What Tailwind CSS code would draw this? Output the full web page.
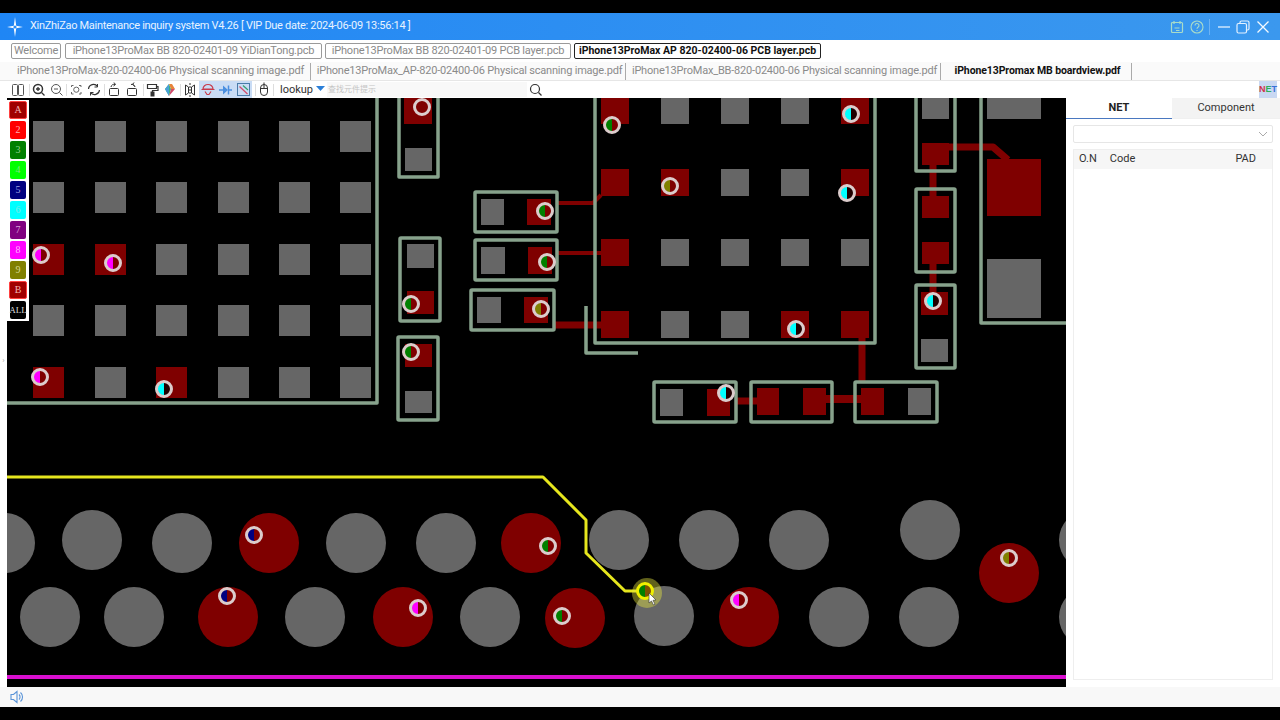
<!DOCTYPE html>
<html lang="en">
<head>
    <meta charset="UTF-8">
    <title>XinZhiZao Maintenance inquiry system</title>
    <script src="https://cdn.jsdelivr.net/npm/@tailwindcss/browser@4"></script>
</head>
<body class="bg-black">
<div class="w-[1280px] h-[720px] overflow-hidden flex flex-col bg-black font-['Roboto','Noto_Sans_CJK_SC',sans-serif]">
    <div class="h-[13px] shrink-0 bg-black"></div>

    <!-- title bar -->
    <div class="h-[27px] shrink-0 flex items-center bg-gradient-to-r from-[#1f86f5] to-[#3b98ee] text-white">
        <svg class="ml-[7px] w-4 h-5" viewBox="0 0 16 20"><path d="M8 0 L9.200 8.800 L16 10 L9.200 11.200 L8 20 L6.800 11.200 L0 10 L6.800 8.800 Z" fill="#fff"/><circle cx="8" cy="10" r="1.600" fill="#2b8cf3"/></svg>
        <span class="ml-[7px] text-[11px] tracking-[-0.3px] text-[#e8f3ff] whitespace-nowrap">XinZhiZao Maintenance inquiry system V4.26 [ VIP Due date: 2024-06-09 13:56:14 ]</span>
        <div class="ml-auto flex items-center">
            <svg class="w-3.5 h-3.5" viewBox="0 0 14 14" fill="none" stroke="#a9dcc9" stroke-width="1.200"><rect x="1.500" y="2.500" width="11" height="10" rx="1"/><path d="M4 1v3M10 1v3M4.500 8h5M6 10.500h3.500"/></svg>
            <svg class="ml-[6px] w-3.5 h-3.5" viewBox="0 0 14 14" fill="none" stroke="#a9dcc9" stroke-width="1.100"><circle cx="7" cy="7" r="6"/><path d="M5 5.500a2 2 0 1 1 3 1.700c-.7.400-1 .8-1 1.600M7 10v1"/></svg>
            <div class="ml-[5px] w-px h-4 bg-[#6db3f5]"></div>
            <svg class="ml-[8px] w-3 h-3" viewBox="0 0 12 12" stroke="#e4f1ff" stroke-width="1.300"><path d="M0 6h12"/></svg>
            <svg class="ml-[6px] w-3.5 h-3.5" viewBox="0 0 14 14" fill="none" stroke="#e4f1ff" stroke-width="1.200"><rect x="1" y="3.500" width="9.500" height="9.500" rx="1.500"/><path d="M4 3.500V2.500A1.500 1.500 0 0 1 5.500 1H11.500A1.500 1.500 0 0 1 13 2.500V8.500A1.500 1.500 0 0 1 11.500 10H10.500"/></svg>
            <svg class="ml-[7px] mr-[11px] w-3 h-3" viewBox="0 0 12 12" stroke="#f4faff" stroke-width="1.300"><path d="M.5.5l11 11M11.500.5l-11 11"/></svg>
        </div>
    </div>

    <!-- pcb tabs -->
    <div class="h-[22px] shrink-0 flex items-center pl-[11px] gap-[3px] bg-white text-[11px] tracking-[-0.2px] text-[#8a8a8a] whitespace-nowrap">
        <div class="w-[50px] h-[16px] flex items-center justify-center border border-[#9a9a9a] rounded-[2px]">Welcome</div>
        <div class="ml-[1px] w-[257px] h-[16px] flex items-center justify-center border border-[#9a9a9a] rounded-[2px]">iPhone13ProMax BB 820-02401-09 YiDianTong.pcb</div>
        <div class="w-[246px] h-[16px] flex items-center justify-center border border-[#9a9a9a] rounded-[2px]">iPhone13ProMax BB 820-02401-09 PCB layer.pcb</div>
        <div class="w-[247px] h-[16px] flex items-center justify-center border border-[#222] rounded-[2px] font-bold text-[#111] text-[10.500px] tracking-normal">iPhone13ProMax AP 820-02400-06 PCB layer.pcb</div>
    </div>

    <!-- pdf tabs -->
    <div class="h-[19px] shrink-0 flex items-center bg-[#fafafa] border-b border-[#e6e6e6] text-[11px] tracking-[-0.2px] text-[#8a8a8a] whitespace-nowrap">
        <div class="w-[311px] h-[17px] flex items-center justify-center pl-[11px] border-r border-[#aaa]">iPhone13ProMax-820-02400-06 Physical scanning image.pdf</div>
        <div class="w-[315px] h-[17px] flex items-center justify-center pl-[3px] border-r border-[#aaa]">iPhone13ProMax_AP-820-02400-06 Physical scanning image.pdf</div>
        <div class="w-[315px] h-[17px] flex items-center justify-center pl-[3px] border-r border-[#aaa]">iPhone13ProMax_BB-820-02400-06 Physical scanning image.pdf</div>
        <div class="w-[191px] h-[17px] flex items-center justify-center pl-[3px] border-r border-[#aaa] font-bold text-[#111] text-[10.500px] tracking-[-0.1px]">iPhone13Promax MB boardview.pdf</div>
    </div>

    <!-- toolbar -->
    <div class="h-[17px] shrink-0 flex items-center bg-white relative">
        <svg class="absolute left-0 top-0 w-[560px] h-[17px]" viewBox="0 0 560 17" fill="none" stroke="#333" stroke-width="1">
            <rect x="12.500" y="3.500" width="5" height="11" rx="1" stroke="#555"/><rect x="18.500" y="3.500" width="5" height="11" rx="1" stroke="#555"/>
            <path d="M29.500 3v12M66.500 3v12M104.500 3v12M143.500 3v12M180.500 3v12M255.500 3v12M273.500 3v12" stroke="#ddd"/>
            <circle cx="38" cy="8" r="4.500" stroke-width="1.500"/><path d="M41.500 11.500l3 3M36 8h4M38 6v4" stroke-width="1.300"/>
            <circle cx="56" cy="8" r="4.500" stroke="#555"/><path d="M59.500 11.500l3 3M54 8h4" stroke="#555"/>
            <path d="M71.500 6V4.500h2M79 4.500h2V6M81 11v2h-2M73.500 13h-2v-2" stroke="#666"/><circle cx="76.300" cy="8.700" r="2.600" stroke="#666"/>
            <path d="M88.500 8a5 5 0 0 1 9-2.500M99.500 9a5 5 0 0 1-9 2.500" stroke-width="1.200"/><path d="M97.500 3v3h-3M90.500 14.500v-3h3" stroke-width="1"/>
            <rect x="109.500" y="7.500" width="9" height="7" rx="1"/><path d="M111 6a3 3 0 0 1 4-2.500M114 1.500l1.500 2-2 1.500"/>
            <rect x="127.500" y="7.500" width="9" height="7" rx="1"/><path d="M135 6a3 3 0 0 0-4-2.500M134 1.500l-1.500 2 2 1.500"/>
            <path d="M147.500 3.500h9v4h-9zM156.500 5.500h1.500v4h-5.500v2" stroke-width="1.200"/><rect x="151" y="11" width="3" height="4" fill="#333"/>
            <path d="M165 8l4-5 2 5-2 7z" fill="#36b37e" stroke="none"/><path d="M171 8l-2-5h3l3 5z" fill="#e6843c" stroke="none"/><path d="M171 8h4l-6 7z" fill="#d14b6a" stroke="none"/><path d="M165 8l4 7V3z" fill="#4a9fd8" stroke="none"/>
            <path d="M185.500 4v10l3-2V6zM194.500 4v10l-3-2V6z"/><path d="M190 2v14" stroke-dasharray="2 1"/>
            <rect x="199" y="0" width="18" height="17" fill="#c9dcf5" stroke="none"/>
            <path d="M203 8a5 4.500 0 0 1 10 0zM201.500 8.500h13M205 10.500l2 3h2l2-3" stroke="#c83a4a" stroke-width="1.200"/>
            <rect x="217" y="0" width="18" height="17" fill="#c9dcf5" stroke="none"/>
            <path d="M219 9h4M228 9h4" stroke="#4a8fe0" stroke-width="1.500"/><path d="M223 4.500l5 4.500-5 4.500z" fill="#4a8fe0" stroke="none"/><path d="M228.500 4.500v9" stroke="#4a8fe0" stroke-width="1.500"/>
            <rect x="235" y="0" width="17" height="17" fill="#c9dcf5" stroke="none"/>
            <rect x="237.500" y="2.500" width="12" height="12" stroke="#4a7ba8" stroke-width="1"/><path d="M239.500 5.500l8 7.500" stroke="#d14b6a" stroke-width="1.200"/><path d="M243 4.500l5 4.500" stroke="#36a070" stroke-width="1.200"/>
            <rect x="260.500" y="3.500" width="7" height="11" rx="3.500"/><path d="M264 3.500v4M260.500 7.500h7M264 1.500v2"/>
            <rect x="327" y="1" width="200" height="15" fill="#f8f8f8" stroke="none"/>
            <path d="M316 5h9l-4.500 5z" fill="#2b7fd8" stroke="none"/>
            <circle cx="535" cy="8" r="4.500" stroke-width="1.200"/><path d="M538.500 11.500l3 3" stroke-width="1.200"/>
        </svg>
        <span class="absolute left-[280px] top-0 text-[11px] leading-[17px] text-[#333]">lookup</span>
        <span class="absolute left-[328px] top-0 text-[8px] leading-[17px] text-[#c4c4c4]">查找元件提示</span>
        <div class="absolute right-[3px] top-0 w-[18px] h-[17px] bg-[#c9d8f2] flex items-center justify-center text-[9px] font-bold font-['Liberation_Sans',sans-serif]"><span class="text-[#d0304a]">N</span><span class="text-[#2fae5a]">E</span><span class="text-[#3a6fd8]">T</span></div>
    </div>

    <!-- main -->
    <div class="h-[589px] shrink-0 flex bg-white">
        <div class="w-[7px] shrink-0 bg-white flex items-center justify-center text-[8px] leading-none text-[#aaa] pb-[64px]">›</div>

        <div class="relative w-[1059px] shrink-0 bg-black overflow-hidden">
            <svg id="board" class="block" width="1059" height="589" viewBox="7 98 1059 589"></svg>

            <!-- layer buttons -->
            <div class="absolute left-0 top-[2px] w-[22px] h-[221px] bg-white flex flex-col items-center gap-[2px] pt-[1px] font-['Liberation_Serif',serif] text-[10px] leading-none">
                <div class="w-[18px] h-[18px] rounded-[2px] bg-[#a00000] border border-[#ff4040] text-[#f0b0b0] flex items-center justify-center">A</div>
                <div class="w-[16px] h-[18px] rounded-[2px] bg-[#ff0000] text-[#ffb0b0] flex items-center justify-center">2</div>
                <div class="w-[16px] h-[18px] rounded-[2px] bg-[#008000] text-[#90d090] flex items-center justify-center">3</div>
                <div class="w-[16px] h-[18px] rounded-[2px] bg-[#00ff00] text-[#80e080] flex items-center justify-center">4</div>
                <div class="w-[16px] h-[18px] rounded-[2px] bg-[#000080] text-[#a0a0e0] flex items-center justify-center">5</div>
                <div class="w-[16px] h-[18px] rounded-[2px] bg-[#00ffff] text-[#80e8e8] flex items-center justify-center">6</div>
                <div class="w-[16px] h-[18px] rounded-[2px] bg-[#800080] text-[#d8a0d8] flex items-center justify-center">7</div>
                <div class="w-[16px] h-[18px] rounded-[2px] bg-[#ff00ff] text-[#ffb0ff] flex items-center justify-center">8</div>
                <div class="w-[16px] h-[18px] rounded-[2px] bg-[#808000] text-[#d8d890] flex items-center justify-center">9</div>
                <div class="w-[18px] h-[18px] rounded-[2px] bg-[#a00000] border border-[#ff4040] text-[#f0b0b0] flex items-center justify-center">B</div>
                <div class="w-[16px] h-[18px] rounded-[2px] bg-black text-[#ddd] text-[9px] flex items-center justify-center">ALL</div>
            </div>
        </div>

        <!-- net panel -->
        <div class="w-[214px] shrink-0 flex flex-col bg-white text-[11px] text-[#333]">
            <div class="h-[21px] shrink-0 flex">
                <div class="w-[106px] flex items-center justify-center font-bold text-[#222] border-b border-[#4a78c0]">NET</div>
                <div class="w-[108px] flex items-center justify-center bg-[#f3f3f3] border-b border-[#f0f0f0]">Component</div>
            </div>
            <div class="mt-[6px] mx-[7px] h-[18px] shrink-0 border border-[#e6e6e6] rounded-[2px] flex items-center justify-end pr-[4px]">
                <svg class="w-2.5 h-2.5" viewBox="0 0 10 10" fill="none" stroke="#aaa"><path d="M1 3l4 4 4-4"/></svg>
            </div>
            <div class="mt-[6px] mb-[7px] mx-[7px] flex-1 border border-[#eee] flex flex-col">
                <div class="h-[19px] flex items-center bg-[#f6f6f6]">
                    <span class="ml-[5px]">O.N</span>
                    <span class="ml-[13px]">Code</span>
                    <span class="ml-auto mr-[16px]">PAD</span>
                </div>
            </div>
        </div>
    </div>

    <!-- status bar -->
    <div class="h-[20px] shrink-0 flex items-center bg-[#f8f8f8]">
        <svg class="ml-[10px] w-[14px] h-[14px]" viewBox="0 0 14 14" fill="none" stroke="#5a94d8" stroke-width="1.100"><path d="M1 4.500h2.500L7 1.500v11L3.500 9.500H1z"/><path d="M9 4.500a3.500 3.500 0 0 1 0 5M10.500 2.500a6 6 0 0 1 0 9"/></svg>
    </div>
    <div class="flex-1 bg-black"></div>
</div>

<script>
    const RED = '#7f0000';
    const GRAY = '#666666';
    const OUTLINE = '#87a28c';
    let out = '';

    function pad(x1, y1, x2, y2, fill) {
        out += `<rect x="${x1}" y="${y1}" width="${x2 - x1}" height="${y2 - y1}" fill="${fill}"/>`;
    }
    function line(points, color, width) {
        out += `<polyline points="${points}" fill="none" stroke="${color}" stroke-width="${width}" stroke-linejoin="round"/>`;
    }
    function box(x1, y1, x2, y2) {
        out += `<rect x="${x1}" y="${y1}" width="${x2 - x1}" height="${y2 - y1}" fill="none" stroke="${OUTLINE}" stroke-width="3.500" rx="1"/>`;
    }
    function via(cx, cy, color, right = RED, ring = '#dccccc') {
        out += `<circle cx="${cx}" cy="${cy}" r="6.500" fill="${right}"/>`;
        out += `<path d="M${cx} ${cy - 6.5}A6.500 6.500 0 0 0 ${cx} ${cy + 6.5}Z" fill="${color}"/>`;
        out += `<circle cx="${cx}" cy="${cy}" r="7.500" fill="none" stroke="${ring}" stroke-width="3"/>`;
    }

    // left BGA grid
    const gridX = [33, 95, 156, 218, 279, 340];
    const gridY = [121, 182, 244, 305, 367];
    const gridRed = ['0,2', '1,2', '0,4', '2,4'];
    gridX.forEach((x, c) => gridY.forEach((y, r) => {
        pad(x, y, x + 31, y + 31, gridRed.includes(c + ',' + r) ? RED : GRAY);
    }));
    line('7,403 377,403 377,98', OUTLINE, 3.5);

    // traces
    line('558,203 593,203 601,195', RED, 4);
    line('558,253 601,253', RED, 4);
    line('554,325 601,325', RED, 7);
    line('862,338 862,382', RED, 7);
    line('737,401 757,401', RED, 7);
    line('826,399 861,399', RED, 8);
    line('949,147 993,147 1008,160', RED, 7);
    line('933,165 933,196', RED, 7);
    line('933,264 933,292', RED, 7);

    // right IC
    const icX = [601, 661, 721, 781, 841];
    const icRows = [[98, 124, 'RGGGR'], [169, 196, 'RRGGR'], [239, 266, 'RGGGG'], [311, 338, 'RGGRR']];
    icRows.forEach(([y1, y2, s]) => icX.forEach((x, i) => pad(x, y1, x + 28, y2, s[i] === 'R' ? RED : GRAY)));
    line('595,98 595,343 875,343 875,98', OUTLINE, 3.5);
    line('586,306 586,353 638,353', OUTLINE, 3.5);

    // two pad components
    pad(404, 98, 432, 124, RED); pad(405, 148, 432, 171, GRAY);
    pad(407, 244, 434, 268, GRAY); pad(407, 291, 434, 314, RED);
    pad(405, 344, 432, 367, RED); pad(405, 391, 432, 413, GRAY);
    pad(481, 199, 504, 225, GRAY); pad(527, 199, 551, 225, RED);
    pad(481, 247, 505, 274, GRAY); pad(528, 247, 552, 274, RED);
    pad(477, 297, 501, 323, GRAY); pad(524, 297, 548, 323, RED);
    pad(660, 389, 683, 416, GRAY); pad(707, 389, 730, 416, RED);
    pad(757, 388, 779, 415, RED); pad(803, 388, 826, 415, RED);
    pad(861, 388, 884, 415, RED); pad(908, 388, 931, 415, GRAY);
    pad(922, 98, 949, 119, GRAY); pad(922, 143, 949, 165, RED);
    pad(922, 196, 949, 218, RED); pad(922, 242, 949, 264, RED);
    pad(921, 292, 948, 315, RED); pad(921, 339, 948, 362, GRAY);
    pad(987, 159, 1041, 216, RED); pad(987, 259, 1041, 318, GRAY);
    pad(987, 98, 1041, 119, GRAY);

    line('399,98 399,177 438,177 438,98', OUTLINE, 3.5);
    box(400, 238, 440, 321); box(398, 337, 438, 420);
    box(475, 192, 557, 232); box(475, 240, 557, 280); box(471, 290, 554, 330);
    box(654, 382, 736, 422); box(751, 382, 832, 422); box(855, 382, 937, 422);
    line('916,98 916,171 955,171 955,98', OUTLINE, 3.5);
    box(916, 189, 955, 272); box(916, 285, 955, 368);
    line('981,98 981,323 1066,323', OUTLINE, 3.5);

    // solder balls
    [[5, 543, 0], [92, 540, 0], [182, 543, 0], [269, 543, 1], [356, 543, 0], [446, 543, 0], [531, 543, 1],
     [619, 540, 0], [709, 540, 0], [799, 540, 0], [930, 530, 0], [1009, 573, 1], [1089, 540, 0],
     [50, 617, 0], [134, 617, 0], [228, 617, 1], [315, 617, 0], [403, 617, 1], [490, 617, 0], [575, 618, 1],
     [664, 616, 0], [749, 617, 1], [839, 617, 0], [929, 617, 0], [1089, 617, 0]].forEach(([x, y, r]) => {
        out += `<circle cx="${x}" cy="${y}" r="30" fill="${r ? RED : GRAY}"/>`;
    });

    // nets
    line('7,477 543,477 586,520 586,553 625,591 645,591', '#e6e61e', 3);
    line('7,677 1066,677', '#d90fd0', 4);

    // vias
    [[41, 255, '#ff00ff'], [113, 263, '#ff00ff'], [40, 377, '#ff00ff'], [418, 608, '#ff00ff'], [739, 600, '#ff00ff'],
     [411, 304, '#008000'], [411, 352, '#008000'], [545, 211, '#008000'], [547, 262, '#008000'], [612, 125, '#008000'],
     [548, 546, '#008000'], [562, 616, '#008000'],
     [541, 309, '#808000'], [670, 186, '#808000'], [1009, 558, '#808000'],
     [254, 535, '#000080'], [227, 596, '#000080'], [422, 107, RED]].forEach(v => via(...v));
    [[164, 389], [851, 114], [847, 193], [796, 329], [726, 393], [933, 301]].forEach(([x, y]) => via(x, y, '#00ffff', '#200000'));

    // highlighted via and pointer
    out += `<circle cx="647" cy="593" r="15" fill="#e8e840" fill-opacity="0.42"/>`;
    via(645, 591, '#008000', '#7f5000', '#f0f000');
    out += `<path d="M649 593l0 10 2.500-2 2 4 1.500-.7-2-4 3-.3z" fill="#fff" stroke="#333" stroke-width="0.600"/>`;

    document.getElementById('board').innerHTML = out;
</script>
</body>
</html>
